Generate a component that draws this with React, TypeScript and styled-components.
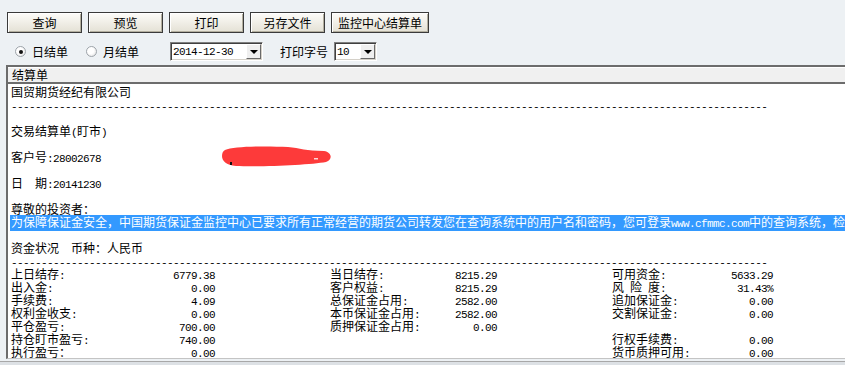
import React from "react";
import styled, { createGlobalStyle } from "styled-components";

const CJK = `"Noto Sans CJK SC", "Noto Sans", sans-serif`;
const MONO = `"Liberation Mono", "DejaVu Sans Mono", monospace`;

const GlobalStyle = createGlobalStyle`
  html, body {
    margin: 0;
    padding: 0;
  }
  body {
    width: 845px;
    height: 365px;
    overflow: hidden;
    background: #edf1f4;
    font-family: ${CJK};
    font-size: 12px;
    color: #000;
  }
`;

const Page = styled.div`
  display: flex;
  flex-direction: column;
  width: 845px;
  height: 365px;
  overflow: hidden;
`;

const Toolbar = styled.div`
  display: flex;
  gap: 6px;
  padding: 12px 0 0 7px;
`;

const Button = styled.button<{ $w: number }>`
  width: ${(p) => p.$w}px;
  height: 21px;
  padding: 0;
  font-family: ${CJK};
  font-size: 12px;
  line-height: 19px;
  color: #000;
  background: linear-gradient(#fdfcf9, #e4e1d5);
  border: 1px solid #3a3a3a;
  box-shadow: inset 1px 1px #ffffff, inset -1px -1px #b3af9f;
`;

const OptionsRow = styled.div`
  display: flex;
  align-items: center;
  height: 19px;
  margin-top: 9px;
  padding-left: 15px;
`;

const RadioItem = styled.label<{ $ml?: number }>`
  display: flex;
  align-items: center;
  gap: 6px;
  margin-left: ${(p) => p.$ml ?? 0}px;
`;

const RadioDot = styled.span<{ $on?: boolean }>`
  display: flex;
  align-items: center;
  justify-content: center;
  width: 11px;
  height: 11px;
  box-sizing: border-box;
  border-radius: 50%;
  border: 1px solid #9ea4aa;
  background: radial-gradient(circle at 40% 40%, #ffffff 40%, #d8d8d8);

  &::after {
    content: "";
    display: ${(p) => (p.$on ? "block" : "none")};
    width: 4px;
    height: 4px;
    border-radius: 50%;
    background: #111;
  }
`;

const FieldLabel = styled.span<{ $ml?: number }>`
  margin-left: ${(p) => p.$ml ?? 0}px;
`;

const Select = styled.div<{ $w: number; $ml?: number }>`
  display: flex;
  align-items: center;
  justify-content: space-between;
  width: ${(p) => p.$w}px;
  height: 19px;
  box-sizing: border-box;
  margin-left: ${(p) => p.$ml ?? 0}px;
  padding: 0 1px 0 2px;
  background: #fff;
  border: 1px solid;
  border-color: #7f7f7f #ffffff #ffffff #7f7f7f;
  box-shadow: inset 1px 1px #404040, inset -1px -1px #d4d0c8;
`;

const DropBtn = styled.span`
  display: flex;
  align-items: center;
  justify-content: center;
  width: 15px;
  height: 15px;
  box-sizing: border-box;
  background: #efefef;
  border: 1px solid;
  border-color: #ffffff #6a6a6a #6a6a6a #ffffff;

  &::after {
    content: "";
    border-left: 4px solid transparent;
    border-right: 4px solid transparent;
    border-top: 4px solid #000;
  }
`;

const Panel = styled.section`
  margin: 4px 0 0 6px;
  border-top: 2px solid #6c6c6c;
  border-left: 2px solid #6c6c6c;
  border-bottom: 1px solid #c4c4c4;
`;

const PanelHeader = styled.div`
  height: 15px;
  line-height: 15px;
  padding-left: 4px;
  background: #f0f0f0;
  border-bottom: 2px solid #6c6c6c;
  box-shadow: inset 0 1px #ffffff;
`;

const Body = styled.div`
  position: relative;
  height: 274px;
  box-sizing: border-box;
  padding: 1px 0 0 3px;
  background: #fff;
  overflow: hidden;
`;

const Line = styled.div`
  height: 13px;
  line-height: 13px;
  white-space: nowrap;
`;

const Ascii = styled.span`
  font-family: ${MONO};
  font-size: 11px;
  letter-spacing: -0.6px;
  white-space: pre;
`;

const Highlight = styled.span`
  display: inline-block;
  margin-left: -1px;
  padding-left: 1px;
  background: #3399ff;
  color: #fff;
`;

const DataRow = styled.div`
  display: flex;
  gap: 115px;
  height: 13px;
  line-height: 13px;
  white-space: nowrap;
`;

const Group = styled.div<{ $w: number }>`
  display: flex;
  justify-content: space-between;
  width: ${(p) => p.$w}px;
`;

const Scribble = styled.svg`
  position: absolute;
  left: 214px;
  top: 62px;
`;

const Strip = styled.div`
  flex: 1;
  margin-top: 2px;
  background: #dde1e5;
  border-top: 1px solid #a8a8a8;
`;

const Txt: React.FC<{ s: string }> = ({ s }) => (
  <>
    {s
      .split(/([\x20-\x7e]+)/)
      .filter(Boolean)
      .map((part, i) =>
        /^[\x20-\x7e]+$/.test(part) ? (
          <Ascii key={i}>{part}</Ascii>
        ) : (
          <React.Fragment key={i}>{part}</React.Fragment>
        )
      )}
  </>
);

const DASHES = "-".repeat(126);

const NOTICE =
  "为保障保证金安全，中国期货保证金监控中心已要求所有正常经营的期货公司转发您在查询系统中的用户名和密码，您可登录www.cfmmc.com中的查询系统，检查相关信息是否与期货公司提供的一致。";

type Cell = [string, string] | null;

const ROWS: Cell[][] = [
  [["上日结存:", "6779.38"], ["当日结存:", "8215.29"], ["可用资金:", "5633.29"]],
  [["出入金:", "0.00"], ["客户权益:", "8215.29"], ["风 险 度:", "31.43%"]],
  [["手续费:", "4.09"], ["总保证金占用:", "2582.00"], ["追加保证金:", "0.00"]],
  [["权利金收支:", "0.00"], ["本币保证金占用:", "2582.00"], ["交割保证金:", "0.00"]],
  [["平仓盈亏:", "700.00"], ["质押保证金占用:", "0.00"], null],
  [["持仓盯市盈亏:", "740.00"], null, ["行权手续费:", "0.00"]],
  [["执行盈亏：", "0.00"], null, ["货币质押可用:", "0.00"]],
];

const WIDTHS = [204, 167, 161];

const BUTTONS: [string, number][] = [
  ["查询", 75],
  ["预览", 75],
  ["打印", 75],
  ["另存文件", 75],
  ["监控中心结算单", 98],
];

export default function App() {
  return (
    <>
      <GlobalStyle />
      <Page>
        <Toolbar>
          {BUTTONS.map(([label, w]) => (
            <Button key={label} $w={w}>
              {label}
            </Button>
          ))}
        </Toolbar>

        <OptionsRow>
          <RadioItem>
            <RadioDot $on />
            日结单
          </RadioItem>
          <RadioItem $ml={18}>
            <RadioDot />
            月结单
          </RadioItem>
          <Select $w={93} $ml={31}>
            <Txt s="2014-12-30" />
            <DropBtn />
          </Select>
          <FieldLabel $ml={17}>打印字号</FieldLabel>
          <Select $w={43} $ml={6}>
            <Txt s="10" />
            <DropBtn />
          </Select>
        </OptionsRow>

        <Panel>
          <PanelHeader>结算单</PanelHeader>
          <Body>
            <Line>国贸期货经纪有限公司</Line>
            <Line>
              <Txt s={DASHES} />
            </Line>
            <Line />
            <Line>
              <Txt s="交易结算单(盯市)" />
            </Line>
            <Line />
            <Line>
              <Txt s="客户号:28002678" />
            </Line>
            <Line />
            <Line>
              <Txt s="日　期:20141230" />
            </Line>
            <Line />
            <Line>尊敬的投资者：</Line>
            <Line>
              <Highlight>
                <Txt s={NOTICE} />
              </Highlight>
            </Line>
            <Line />
            <Line>资金状况　币种：人民币</Line>
            <Line>
              <Txt s={DASHES} />
            </Line>
            {ROWS.map((row, r) => (
              <DataRow key={r}>
                {row.map((cell, c) => (
                  <Group key={c} $w={WIDTHS[c]}>
                    {cell && (
                      <>
                        <span>
                          <Txt s={cell[0]} />
                        </span>
                        <span>
                          <Txt s={cell[1]} />
                        </span>
                      </>
                    )}
                  </Group>
                ))}
              </DataRow>
            ))}

            <Scribble width="112" height="22" viewBox="0 0 112 22">
              <path
                d="M 3 4 C 12 0, 45 0, 66 1 C 78 2, 84 5, 102 5 C 110 6, 111 14, 104 16 C 88 19, 40 21, 14 20 C 4 19, 0 15, 0 10 C 0 7, 1 5, 3 4 Z"
                fill="#fd3a3a"
              />
              <rect x="92" y="12" width="4" height="1.5" fill="#ffd6d6" />
              <rect x="8" y="16" width="2" height="3" fill="#111" />
            </Scribble>
          </Body>
        </Panel>
        <Strip />
      </Page>
    </>
  );
}
